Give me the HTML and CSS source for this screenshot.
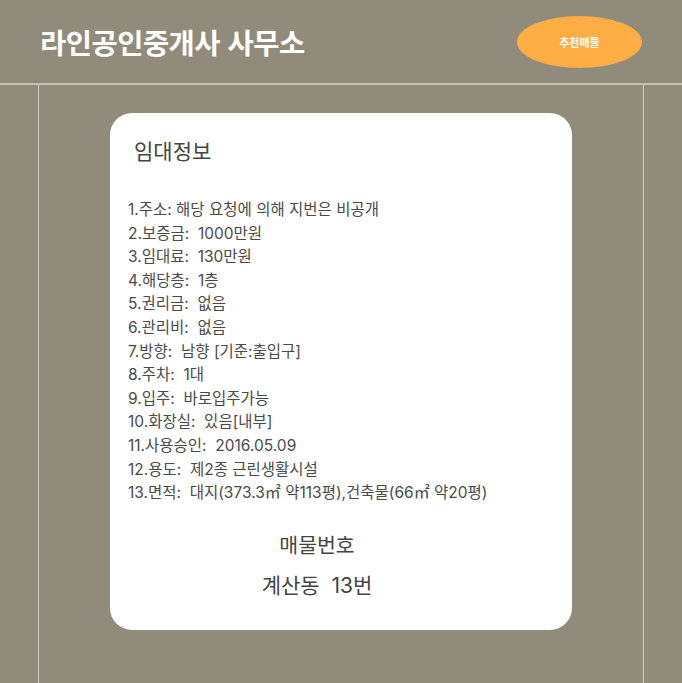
FILE: index.html
```html
<!DOCTYPE html>
<html lang="ko">
<head>
<meta charset="utf-8">
<link rel="stylesheet" href="styles.css">
</head>
<body>
<header class="top">
  <h1 class="brand">라인공인중개사 사무소</h1>
  <a class="pick">추천매물</a>
</header>
<main class="frame">
  <section class="card">
    <h2 class="card-title">임대정보</h2>
    <ul class="info">
      <li>1.주소: 해당 요청에 의해 지번은 비공개</li>
      <li>2.보증금:&nbsp; 1000만원</li>
      <li>3.임대료:&nbsp; 130만원</li>
      <li>4.해당층:&nbsp; 1층</li>
      <li>5.권리금:&nbsp; 없음</li>
      <li>6.관리비:&nbsp; 없음</li>
      <li>7.방향:&nbsp; 남향 [기준:출입구]</li>
      <li>8.주차:&nbsp; 1대</li>
      <li>9.입주:&nbsp; 바로입주가능</li>
      <li>10.화장실:&nbsp; 있음[내부]</li>
      <li>11.사용승인:&nbsp; 2016.05.09</li>
      <li>12.용도:&nbsp; 제2종 근린생활시설</li>
      <li>13.면적:&nbsp; 대지(373.3<span class="sq">㎡</span> 약113평),건축물(66<span class="sq">㎡</span> 약20평)</li>
    </ul>
    <div class="num-label">매물번호</div>
    <div class="num-value">계산동&nbsp; 13번</div>
  </section>
</main>
</body>
</html>
```
FILE: styles.css
```css
html, body {
  margin: 0;
  padding: 0;
  background: #918b7b;
  font-family: "Inter", "Noto Sans CJK KR", sans-serif;
  height: 100%;
}
body {
  overflow: hidden;
}
.top {
  border-bottom: 2px solid #c6c1b5;
  display: flex;
  align-items: center;
  justify-content: space-between;
  padding: 0 40px 0 40px;
  box-sizing: border-box;
  height: 85px;
}
.brand {
  margin: 0;
  color: #fff;
  font-family: "Noto Sans CJK KR", sans-serif;
  font-weight: 700;
  font-size: 28.5px;
  letter-spacing: -0.5px;
}
.pick {
  width: 125px;
  height: 52px;
  border-radius: 50%;
  background: #ffad45;
  color: #fff;
  font-family: "Noto Sans CJK KR", sans-serif;
  font-weight: 700;
  font-size: 11px;
  display: flex;
  align-items: center;
  justify-content: center;
}
.frame {
  margin: 0 38px 0 38px;
  border-left: 1px solid #d2cec4;
  border-right: 1px solid #d2cec4;
  height: 620px;
  padding-top: 28px;
  box-sizing: border-box;
}
.card {
  width: 462px;
  height: 517px;
  margin: 0 auto;
  background: #fff;
  border-radius: 22px;
  box-sizing: border-box;
  padding: 24px 18px 0 18px;
  color: #4a4a4a;
}
.card-title {
  margin: 0 0 0 6px;
  font-weight: 400;
  font-size: 21px;
  line-height: 30px;
  color: #444;
}
.info {
  list-style: none;
  margin: 31px 0 0 0;
  padding: 0;
  font-size: 15.5px;
  line-height: 23.6px;
  color: #4a4a4a;
}
.sq {
  font-size: 16px;
  line-height: 0;
}
.num-label {
  text-align: center;
  font-size: 20.5px;
  line-height: 30px;
  margin-top: 26px;
  padding-right: 48px;
  color: #444;
}
.num-value {
  text-align: center;
  font-size: 21px;
  line-height: 30px;
  margin-top: 10px;
  padding-right: 48px;
  color: #444;
}
```
